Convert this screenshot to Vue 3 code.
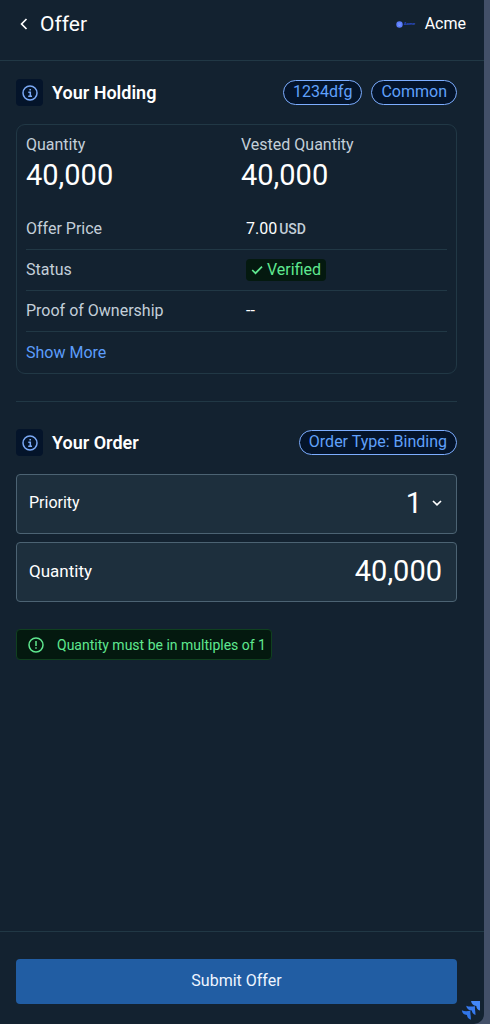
<script setup>
import { ref } from 'vue'

const totals = [
  { label: 'Quantity', value: '40,000' },
  { label: 'Vested Quantity', value: '40,000' },
]
const priorities = ['1', '2', '3']
const priority = ref('1')
const quantity = ref('40,000')
</script>

<template>
  <div class="page">
    <div class="panel">
      <header class="header">
        <div class="heading">
          <button class="back" type="button" aria-label="Back">
            <svg width="8" height="12" viewBox="0 0 8 12" fill="none" stroke="currentColor" stroke-width="1.7">
              <path d="M6.5 1 1.6 6l4.900 5" />
            </svg>
          </button>
          <h1 class="title">Offer</h1>
        </div>
        <div class="company">
          <svg class="logo" width="20" height="8" viewBox="0 0 20 8" aria-hidden="true">
            <circle cx="3.5" cy="4.5" r="3.2" fill="#5b7dfb" />
            <path d="M2 4h3M2.5 5.5h2" stroke="#8ba3ff" stroke-width=".7" />
            <text x="8" y="4.8" font-size="4.4" font-weight="700" fill="#2b4ed0">Acme</text>
          </svg>
          <span>Acme</span>
        </div>
      </header>

      <main class="content">
        <section class="holding">
          <div class="section-head">
            <span class="info">
              <svg width="16" height="16" viewBox="0 0 16 16" fill="none" stroke="currentColor" stroke-width="1.5">
                <circle cx="8" cy="8" r="7" />
                <path d="M6.3 7.2h2v4M6.2 11.2h3.8M7.4 4.7h1.6" />
              </svg>
            </span>
            <h2 class="section-title">Your Holding</h2>
            <span class="chip">1234dfg</span>
            <span class="chip">Common</span>
          </div>

          <div class="card">
            <dl class="totals">
              <div v-for="item in totals" :key="item.label">
                <dt>{{ item.label }}</dt>
                <dd>{{ item.value }}</dd>
              </div>
            </dl>
            <dl class="details">
              <div class="row">
                <dt>Offer Price</dt>
                <dd>7.00 <span class="unit">USD</span></dd>
              </div>
              <div class="row">
                <dt>Status</dt>
                <dd>
                  <span class="verified">
                    <svg width="12" height="10" viewBox="0 0 12 10" fill="none" stroke="currentColor" stroke-width="1.7">
                      <path d="M1.2 5 4.5 8.2 11 1.6" />
                    </svg>
                    Verified
                  </span>
                </dd>
              </div>
              <div class="row">
                <dt>Proof of Ownership</dt>
                <dd>--</dd>
              </div>
            </dl>
            <button class="more" type="button">Show More</button>
          </div>
        </section>

        <section class="order">
          <div class="section-head">
            <span class="info">
              <svg width="16" height="16" viewBox="0 0 16 16" fill="none" stroke="currentColor" stroke-width="1.5">
                <circle cx="8" cy="8" r="7" />
                <path d="M6.3 7.2h2v4M6.2 11.2h3.8M7.4 4.7h1.6" />
              </svg>
            </span>
            <h2 class="section-title">Your Order</h2>
            <span class="chip">Order Type: Binding</span>
          </div>

          <div class="field">
            <label class="field-label" for="priority">Priority</label>
            <select id="priority" v-model="priority" class="control select">
              <option v-for="p in priorities" :key="p">{{ p }}</option>
            </select>
            <svg class="caret" width="10" height="6" viewBox="0 0 10 6" fill="none" stroke="currentColor" stroke-width="1.7">
              <path d="M1 1l4 3.8L9 1" />
            </svg>
          </div>
          <div class="field">
            <label class="field-label strong" for="quantity">Quantity</label>
            <input id="quantity" v-model="quantity" class="control" type="text" inputmode="numeric" />
          </div>

          <p class="hint" role="status">
            <svg width="16" height="16" viewBox="0 0 16 16" fill="none" stroke="currentColor" stroke-width="1.5">
              <circle cx="8" cy="8" r="7" />
              <path d="M8 4v5M8 10.2v1.6" />
            </svg>
            <span>Quantity must be in multiples of 1</span>
          </p>
        </section>
      </main>

      <footer class="footer">
        <button class="submit" type="button">Submit Offer</button>
        <svg class="badge" width="20" height="20" viewBox="0 0 20 20" aria-hidden="true">
          <path d="M10 1h9v9.500c-2.200-.5-3.500-2-3.700-4.500C12.500 5.500 10.500 4 10 1Z" fill="#4388fa" />
          <path d="M5.200 5.700c2.800 1.200 5.200.9 8.800.5-.3 3.500.6 5.300.5 8.800-2.200-.7-3.500-2.300-3.700-4.500C7.800 10.300 5.700 8.800 5.200 5.700Z" fill="#367aef" />
          <path d="M.8 10.300c2.800 1.200 5.200.9 8.600.5-.3 3.500.7 5.300.4 8.900-2.200-.7-3.700-2.500-3.900-4.700C3 14.800 1.200 13.300.8 10.300Z" fill="#3176e8" />
        </svg>
      </footer>
    </div>
  </div>
</template>

<style>
body {
  background: #435068;
}
</style>

<style scoped>
.page {
  box-sizing: border-box;
  min-height: 100vh;
  padding-right: 6px;
  display: flex;
  background: #435068;
  font-family: Roboto, "Liberation Sans", sans-serif;
  font-size: 16px;
  line-height: 20px;
  color: #fff;
}
.panel {
  flex: 1;
  min-width: 0;
  display: flex;
  flex-direction: column;
  background: #132230;
  border-bottom-right-radius: 10px;
}
h1, h2, dl, dt, dd, p {
  margin: 0;
}
button, input, select {
  font-family: inherit;
  color: inherit;
}
svg {
  flex: none;
}
.header {
  display: flex;
  justify-content: space-between;
  padding: 12px 18px 24px 20px;
  border-bottom: 1px solid #213845;
}
.heading, .company {
  display: flex;
  align-items: center;
}
.back {
  display: flex;
  padding: 0;
  margin-right: 12px;
  border: 0;
  background: none;
}
.title {
  font-size: 21px;
  font-weight: 400;
  line-height: 24px;
}
.company {
  gap: 9px;
}
.content {
  flex: 1;
  padding: 18px 27px 24px 16px;
}
.section-head {
  display: flex;
  align-items: center;
  gap: 9px;
  margin-bottom: 18px;
}
.info {
  display: flex;
  align-items: center;
  justify-content: center;
  width: 27px;
  height: 27px;
  border-radius: 4px;
  background: #04142a;
  color: #7ba9f5;
}
.section-title {
  flex: 1;
  font-size: 18px;
  font-weight: 600;
  line-height: 24px;
}
.chip {
  padding: 1px 9px 2px;
  border: 1px solid #7cadff;
  border-radius: 13px;
  background: #04142a;
  color: #60a1fb;
  line-height: 20px;
}
.card {
  padding: 10px 9px;
  border: 1px solid #213845;
  border-radius: 9px;
}
.totals {
  display: grid;
  grid-template-columns: 215px 1fr;
  margin-bottom: 14px;
}
.totals dt, .row dt {
  color: #c3cfd9;
}
.totals dd {
  font-size: 29px;
  line-height: 40px;
}
.row {
  display: grid;
  grid-template-columns: 220px 1fr;
  align-items: center;
  min-height: 41px;
  box-sizing: border-box;
  border-bottom: 1px solid #213845;
}
.unit {
  margin-left: -2px;
  font-size: 14px;
  font-weight: 500;
  color: #c3cfd9;
}
.verified {
  display: inline-flex;
  align-items: center;
  gap: 4px;
  padding: 1px 5px;
  border-radius: 4px;
  background: #04190f;
  color: #5fe88f;
}
.more {
  display: block;
  margin-top: 10px;
  padding: 0;
  border: 0;
  background: none;
  color: #5c9dfb;
  font-size: 16px;
  line-height: 21px;
}
.order {
  margin-top: 27px;
  padding-top: 27px;
  border-top: 1px solid #213845;
}
.field {
  display: flex;
  align-items: center;
  box-sizing: border-box;
  min-height: 60px;
  margin-bottom: 8px;
  padding: 0 14px 2px 12px;
  border: 1px solid #4c6373;
  border-radius: 4px;
  background: #1d2f3d;
}
.field-label {
  flex: 1;
}
.strong {
  font-size: 17px;
}
.control {
  min-width: 0;
  width: 160px;
  padding: 0;
  border: 0;
  background: none;
  font-size: 29px;
  line-height: 40px;
  text-align: right;
}
.select {
  appearance: none;
  text-align-last: right;
}
.select option {
  color: #132230;
}
.caret {
  margin-left: 10px;
}
.hint {
  display: inline-flex;
  align-items: center;
  gap: 13px;
  margin-top: 19px;
  padding: 5px 5px 4px 11px;
  border: 1px solid #10401f;
  border-radius: 4px;
  background: #04190f;
  color: #5fe88f;
  font-size: 14px;
}
.footer {
  position: relative;
  padding: 27px 27px 20px 16px;
  border-top: 1px solid #213845;
}
.submit {
  width: 100%;
  height: 45px;
  padding: 0 0 2px;
  border: 0;
  border-radius: 4px;
  background: #215da3;
  color: #eef5ff;
  font-size: 16px;
}
.badge {
  position: absolute;
  right: 3px;
  bottom: 4px;
}
</style>
